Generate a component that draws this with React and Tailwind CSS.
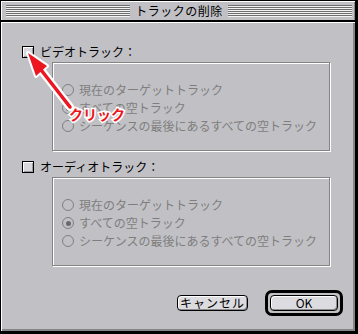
const FONT = "font-['Noto_Sans_CJK_JP','Noto_Sans_CJK_SC',sans-serif]";

function Stripes() {
  return (
    <div className="flex-1 h-[12px] bg-[repeating-linear-gradient(to_bottom,#6e6e6e_0_1px,#f2f2f2_1px_2px)]" />
  );
}

function CheckBox() {
  return (
    <div className="w-[12px] h-[12px] border border-black bg-[#d8d8dc] shadow-[inset_1px_1px_0_#fff,inset_-1px_-1px_0_#9c9c9c]" />
  );
}

function Radio({ label, selected }) {
  return (
    <div className="h-[18px] flex items-center gap-[5px]">
      <div className="w-[12px] h-[12px] rounded-full border border-[#808080] flex items-center justify-center">
        {selected && <div className="w-[5px] h-[5px] rounded-full bg-[#6a6a6a]" />}
      </div>
      <span className="text-[12px] leading-none text-[#7e7e7e]">{label}</span>
    </div>
  );
}

function Group({ title }) {
  return (
    <>
      <div className="h-[12px] flex items-center gap-[6px]">
        <CheckBox />
        <span className="text-[12px] leading-none text-black">{title}</span>
      </div>
      <div className="mt-[4px] ml-[30px] w-[278px] h-[89px] border border-[#848484] shadow-[inset_1px_1px_0_#fff,1px_1px_0_#fff] pt-[18px] pl-[9px]">
        <Radio label="現在のターゲットトラック" />
        <Radio label="すべての空トラック" selected />
        <Radio label="シーケンスの最後にあるすべての空トラック" />
      </div>
    </>
  );
}

export default function App() {
  return (
    <div className={`w-[358px] h-[334px] bg-black relative overflow-hidden ${FONT}`}>
      <div className="w-[355px] h-[331px] border-l border-t border-black bg-[#c1c1c5] flex flex-col">
        {/* title bar */}
        <div className="h-[19px] flex items-center pl-[5px] pr-[3px] shadow-[inset_1px_1px_0_#fff,inset_-1px_0_0_#8a8a8a]">
          <Stripes />
          <span className="px-[5px] text-[12px] leading-none text-black tracking-[0.5px]">トラックの削除</span>
          <Stripes />
        </div>
        <div className="h-[2px] bg-black" />

        {/* body */}
        <div className="flex-1 flex flex-col pl-[21px] pt-[24px] pr-[12px] shadow-[inset_1px_1px_0_#fff,inset_-2px_-2px_0_#868686]">
          <Group title="ビデオトラック：" />
          <div className="h-[10px]" />
          <Group title="オーディオトラック：" />

          <div className="mt-[24px] flex justify-end items-center gap-[17px]">
            <button className="w-[71px] h-[16px] rounded-[4px] border border-black bg-[#dcdce0] shadow-[inset_1px_1px_0_#fff,inset_-1px_-1px_0_#8c8c8c] text-[12px] leading-none text-black tracking-[1px] flex items-center justify-center">
              キャンセル
            </button>
            <div className="w-[78px] h-[26px] rounded-[7px] border-[3px] border-black p-[2px]">
              <button className="w-full h-full rounded-[4px] border border-black bg-[#dcdce0] shadow-[inset_1px_1px_0_#fff,inset_-1px_-1px_0_#8c8c8c] text-[12px] leading-none text-black flex items-center justify-center">
                OK
              </button>
            </div>
          </div>
        </div>
      </div>

      {/* annotation arrow */}
      <svg className="absolute left-0 top-0 pointer-events-none" width="358" height="334" viewBox="0 0 358 334">
        <line x1="70" y1="107" x2="38" y2="66" stroke="#fff" strokeWidth="8" strokeLinecap="round" />
        <polygon points="28,53 47,66 36,76" fill="#fff" stroke="#fff" strokeWidth="4" strokeLinejoin="round" />
        <line x1="70" y1="107" x2="38" y2="66" stroke="#ec1520" strokeWidth="3.5" strokeLinecap="round" />
        <polygon points="28,53 47,66 36,76" fill="#ec1520" />
      </svg>
      <span className="absolute left-[69px] top-[107px] text-[14px] leading-none font-bold text-[#ec1520] [paint-order:stroke_fill] [-webkit-text-stroke:3px_#fff]">
        クリック
      </span>
    </div>
  );
}
